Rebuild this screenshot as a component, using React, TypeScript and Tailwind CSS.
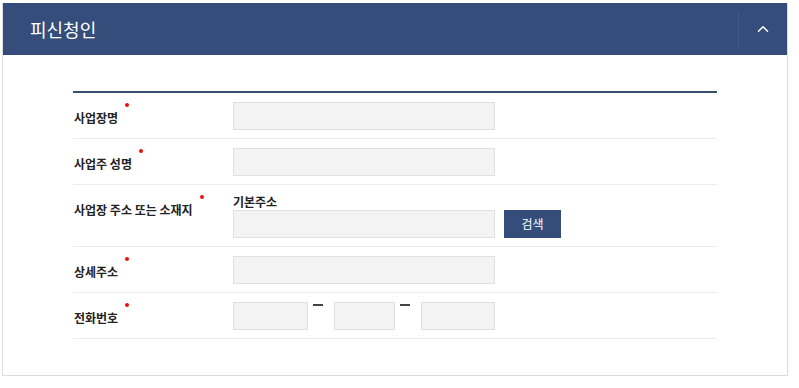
import { ChevronUp } from 'lucide-react'

const font = { fontFamily: '"Noto Sans CJK KR", "Noto Sans", sans-serif' }

function Label({ text }: { text: string }) {
  return (
    <div className="w-[160px] shrink-0 pt-[8px] pl-px text-[12px] leading-4">
      <span className="relative inline-block font-bold text-[#222]">
        {text}
        <span className="absolute -top-[7px] -right-[11px] w-[4px] h-[4px] rounded-full bg-[#f01010]" />
      </span>
    </div>
  )
}

function Input({ w }: { w: string }) {
  return <div className={`${w} h-[28px] bg-[#f3f3f3] border border-[#e0e0e0]`} />
}

function Row({ label, children }: { label: string; children: React.ReactNode }) {
  return (
    <div className="flex border-b border-[#ececec] pt-[9px] pb-[8px] leading-none">
      <Label text={label} />
      <div>{children}</div>
    </div>
  )
}

function Dash() {
  return <span className="block ml-[5px] mt-[2px] w-[10px] h-[2px] bg-[#444]" />
}

export default function App() {
  return (
    <div className="w-[799px] h-[388px] bg-white pt-[3px] pl-[2px]" style={font}>
      <section className="w-[786px] h-[373px] border-x border-b border-[#dcdcdc]">
        <header className="h-[52px] bg-[#344d7a] flex items-center">
          <h1 className="flex-1 pl-[27px] text-[18px] text-white leading-none">피신청인</h1>
          <div className="h-[35px] w-[49px] border-l border-[#40588a] flex items-center justify-center">
            <ChevronUp size={18} strokeWidth={2} className="text-white" />
          </div>
        </header>

        <div className="pl-[70px] pt-[36px]">
          <div className="w-[644px] border-t-2 border-[#3a4e72]">
            <Row label="사업장명">
              <Input w="w-[262px]" />
            </Row>
            <Row label="사업주 성명">
              <Input w="w-[262px]" />
            </Row>
            <Row label="사업장 주소 또는 소재지">
              <p className="text-[12px] leading-4 font-bold text-[#222]">기본주소</p>
              <div className="flex gap-[9px]">
                <Input w="w-[262px]" />
                <button className="w-[57px] h-[28px] bg-[#344d7a] text-white text-[12px]">검색</button>
              </div>
            </Row>
            <Row label="상세주소">
              <Input w="w-[262px]" />
            </Row>
            <Row label="전화번호">
              <div className="flex items-start">
                <Input w="w-[75px]" />
                <Dash />
                <div className="ml-[11px]"><Input w="w-[61px]" /></div>
                <Dash />
                <div className="ml-[11px]"><Input w="w-[74px]" /></div>
              </div>
            </Row>
          </div>
        </div>
      </section>
    </div>
  )
}
